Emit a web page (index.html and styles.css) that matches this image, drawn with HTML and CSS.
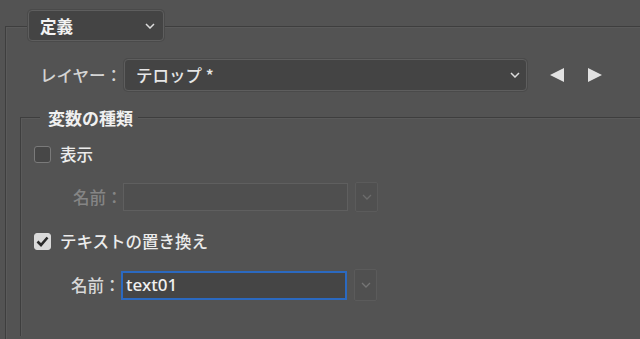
FILE: index.html
```html
<!DOCTYPE html>
<html lang="ja">
<head>
<meta charset="utf-8">
<link rel="stylesheet" href="styles.css">
</head>
<body>
<div class="outer">
  <div class="select def-select">
    <span class="select-text strong">定義</span>
    <svg class="chev" width="10" height="6" viewBox="0 0 10 6"><path d="M1 1 L5 5 L9 1" fill="none" stroke="#dcdcdc" stroke-width="1.5"/></svg>
  </div>

  <div class="layer-row">
    <span class="label layer-label">レイヤー：</span>
    <div class="select layer-select">
      <span class="select-text">テロップ *</span>
      <svg class="chev" width="10" height="6" viewBox="0 0 10 6"><path d="M1 1 L5 5 L9 1" fill="none" stroke="#dcdcdc" stroke-width="1.5"/></svg>
    </div>
    <svg class="tri tri-left" width="14" height="14" viewBox="0 0 14 14"><path d="M0 7 L14 0 L14 14 Z" fill="#e2e2e2"/></svg>
    <svg class="tri tri-right" width="14" height="14" viewBox="0 0 14 14"><path d="M14 7 L0 0 L0 14 Z" fill="#e2e2e2"/></svg>
  </div>

  <div class="inner">
    <div class="legend">変数の種類</div>

    <div class="check-row first">
      <span class="checkbox"></span>
      <span class="label check-label">表示</span>
    </div>

    <div class="name-row disabled">
      <span class="label name-label">名前：</span>
      <div class="field field-disabled"></div>
      <div class="field-btn btn-disabled">
        <svg width="10" height="6" viewBox="0 0 10 6"><path d="M1 1 L5 5 L9 1" fill="none" stroke="#6c6c6c" stroke-width="1.3"/></svg>
      </div>
    </div>

    <div class="check-row second">
      <span class="checkbox checked">
        <svg width="13" height="11" viewBox="0 0 13 11"><path d="M1.5 5.5 L5 9 L11.5 1.5" fill="none" stroke="#2a2a2a" stroke-width="2.6"/></svg>
      </span>
      <span class="label check-label">テキストの置き換え</span>
    </div>

    <div class="name-row enabled">
      <span class="label name-label">名前：</span>
      <div class="field field-active"><span class="field-text">text01</span></div>
      <div class="field-btn btn-enabled">
        <svg width="10" height="6" viewBox="0 0 10 6"><path d="M1 1 L5 5 L9 1" fill="none" stroke="#757575" stroke-width="1.3"/></svg>
      </div>
    </div>
  </div>
</div>
</body>
</html>
```

FILE: styles.css
```css
html, body {
  margin: 0;
  padding: 0;
  height: 100%;
  background: #535353;
  overflow: hidden;
}

body {
  font-family: "Noto Sans CJK JP", "Noto Sans", sans-serif;
  font-size: 16.5px;
  font-weight: 500;
  color: #d8d8d8;
}

.outer {
  margin: 26px 0 0 5px;
  border-top: 1px solid #3e3e3e;
  border-left: 1px solid #3e3e3e;
  box-shadow: inset 1px 1px 0 #5a5a5a;
  height: 312px;
}

.select {
  display: flex;
  align-items: center;
  justify-content: space-between;
  box-sizing: border-box;
  background: #444444;
  border: 1px solid #5e5e5e;
  border-radius: 4px;
  box-shadow: 0 0 0 1px #4a4a4a;
}

.def-select {
  margin: -17px 0 0 22px;
  width: 136px;
  height: 31px;
  padding: 0 8px 0 11px;
}

.select-text {
  color: #e6e6e6;
  line-height: 20px;
}

.strong {
  color: #f2f2f2;
  font-weight: 700;
  font-size: 16.5px;
}

.chev {
  flex: none;
}

.layer-row {
  display: flex;
  align-items: center;
  margin-top: 18px;
  padding-left: 34px;
  height: 32px;
}

.label {
  line-height: 20px;
  white-space: nowrap;
}

.layer-label {
  width: 84px;
  color: #d4d4d4;
}

.layer-select {
  width: 403px;
  height: 32px;
  padding: 0 6px 0 11px;
}

.tri-left {
  margin-left: 23px;
}

.tri-right {
  margin-left: 24px;
}

.inner {
  margin: 26px 0 0 14px;
  border-top: 1px solid #3e3e3e;
  border-left: 1px solid #3e3e3e;
  box-shadow: inset 1px 1px 0 #5a5a5a;
  height: 218px;
}

.legend {
  width: max-content;
  margin: -10px 0 0 19px;
  padding: 0 5px 0 8px;
  background: #535353;
  line-height: 20px;
  color: #f0f0f0;
  font-weight: 700;
  font-size: 17px;
}

.check-row {
  display: flex;
  align-items: center;
  height: 24px;
  padding-left: 13px;
}

.check-row.first {
  margin-top: 14px;
}

.check-row.second {
  margin-top: 17px;
}

.checkbox {
  box-sizing: border-box;
  width: 17px;
  height: 17px;
  border: 1.5px solid #7a7a7a;
  border-radius: 3px;
  background: #474747;
  display: flex;
  align-items: center;
  justify-content: center;
}

.checkbox.checked {
  background: #dadada;
  border-color: #dadada;
}

.check-label {
  margin-left: 9px;
  color: #ececec;
}

.name-row {
  display: flex;
  align-items: center;
}

.name-row.disabled {
  margin-top: 16px;
  padding-left: 52px;
  height: 30px;
}

.name-row.enabled {
  margin-top: 16px;
  padding-left: 50px;
  height: 32px;
}

.name-label {
  width: 50px;
}

.disabled .name-label {
  color: #858585;
}

.enabled .name-label {
  color: #d8d8d8;
}

.field {
  box-sizing: border-box;
  display: flex;
  align-items: center;
}

.field-disabled {
  width: 225px;
  height: 28px;
  background: #4f4f4f;
  border: 1px solid #5f5f5f;
}

.field-active {
  width: 226px;
  height: 29px;
  background: #454545;
  border: 2px solid #2b69c0;
  padding-left: 3px;
}

.field-text {
  font-family: "Noto Sans", sans-serif;
  font-size: 17px;
  font-weight: 500;
  color: #f0f0f0;
  line-height: 20px;
}

.field-btn {
  box-sizing: border-box;
  width: 23px;
  margin-left: 7px;
  display: flex;
  align-items: center;
  justify-content: center;
  background: #505050;
  border: 1px solid #5b5b5b;
  border-radius: 2px;
}

.btn-disabled {
  height: 30px;
}

.btn-enabled {
  height: 32px;
}
```
